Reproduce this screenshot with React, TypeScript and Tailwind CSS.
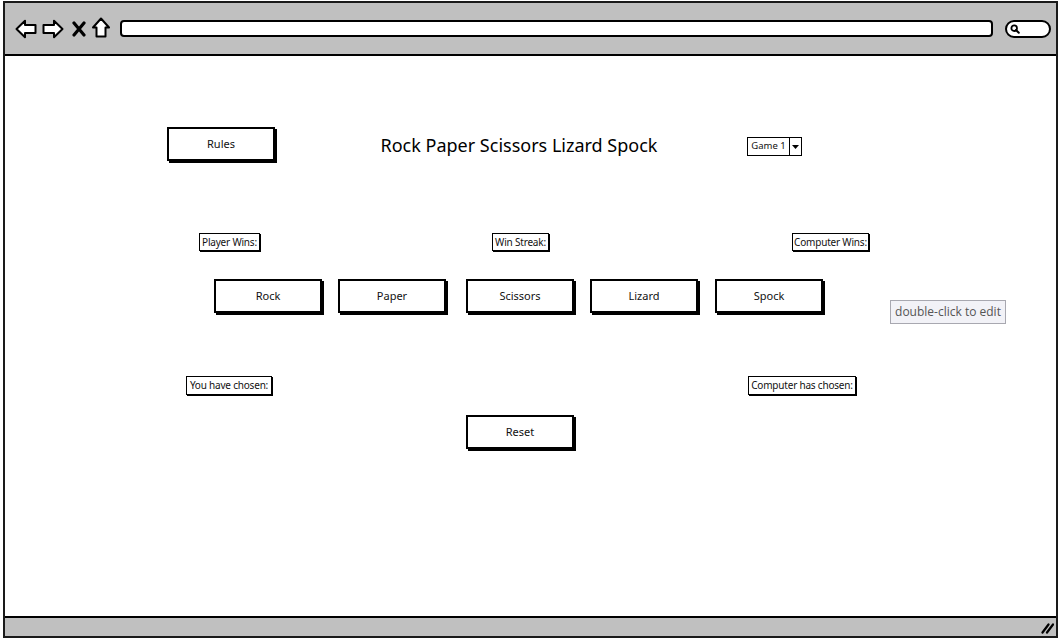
import React from 'react';

const SKETCH = '"Noto Sans", "Open Sans", sans-serif';

function ArrowLeft() {
  return (
    <svg width="22" height="20" viewBox="0 0 22 20">
      <path d="M1.5 10 L10 1.8 L10 6 L20.5 6 L20.5 14 L10 14 L10 18.2 Z" fill="#fff" stroke="#000" strokeWidth="2" strokeLinejoin="round" />
    </svg>
  );
}

function ArrowRight() {
  return (
    <svg width="22" height="20" viewBox="0 0 22 20">
      <path d="M20.5 10 L12 1.8 L12 6 L1.5 6 L1.5 14 L12 14 L12 18.2 Z" fill="#fff" stroke="#000" strokeWidth="2" strokeLinejoin="round" />
    </svg>
  );
}

function CloseX() {
  return (
    <svg width="14" height="16" viewBox="0 0 14 16">
      <path d="M2 2 L12 14 M12 2 L2 14" stroke="#000" strokeWidth="3.2" strokeLinecap="round" />
    </svg>
  );
}

function Home() {
  return (
    <svg width="18" height="21" viewBox="0 0 18 21">
      <path d="M9 1.5 L17 10.5 L13.5 10.5 L13.5 19.5 L4.5 19.5 L4.5 10.5 L1 10.5 Z" fill="#fff" stroke="#000" strokeWidth="2" strokeLinejoin="round" />
    </svg>
  );
}

function Grip() {
  return (
    <svg width="13" height="13" viewBox="0 0 13 13">
      <path d="M1.5 11.5 L7.5 3.5 M6 11.5 L12 3.5" stroke="#000" strokeWidth="2.2" strokeLinecap="round" />
    </svg>
  );
}

// Balsamiq-ish button: the drop shadow is part of the drawn edge, so reserve room for it
function SketchButton({ label, className = '' }: { label: string; className?: string }) {
  return (
    <div
      className={`w-[108px] h-[34px] mr-[2px] border-2 border-black bg-white shadow-[2px_2px_0_#000] flex items-center justify-center text-[11px] text-[#111] ${className}`}
    >
      {label}
    </div>
  );
}

function Label({ text, w, className = '' }: { text: string; w: string; className?: string }) {
  return (
    <div
      className={`${w} h-[18px] mr-[1px] border-[1.5px] border-black bg-white shadow-[1px_1px_0_#000] flex items-center justify-center text-[10px] text-[#111] whitespace-nowrap tracking-[-0.2px] ${className}`}
    >
      {text}
    </div>
  );
}

export default function App() {
  return (
    <div className="w-[1063px] h-[641px] bg-white overflow-hidden" style={{ fontFamily: SKETCH }}>
      <div className="ml-[3px] mt-[1px] w-[1055px] h-[637px] border-2 border-[#1a1a1a] flex flex-col">
        {/* browser chrome */}
        <div className="h-[53px] bg-[#c0c0c0] border-b-2 border-black flex items-center pl-[10px] pr-[5px]">
          <ArrowLeft />
          <div className="ml-[5px]">
            <ArrowRight />
          </div>
          <div className="ml-[8px]">
            <CloseX />
          </div>
          <div className="ml-[6px] -mt-[2px]">
            <Home />
          </div>
          <div className="ml-[10px] flex-1 h-[17px] bg-white border-2 border-black rounded-[4px]" />
          <div className="ml-[12px] w-[46px] h-[18px] bg-white border-2 border-black rounded-full flex items-center pl-[3px]">
            <svg width="10" height="10" viewBox="0 0 10 10">
              <circle cx="4.2" cy="4.2" r="2.8" fill="none" stroke="#000" strokeWidth="1.8" />
              <path d="M6 6 L8.8 8.8" stroke="#000" strokeWidth="2" strokeLinecap="round" />
            </svg>
          </div>
        </div>

        {/* page */}
        <div className="flex-1 bg-white flex flex-col">
          <div className="mt-[71px] flex items-start">
            <SketchButton label="Rules" className="ml-[162px] h-[32px]" />
            <div className="ml-[102px] w-[280px] h-[34px] flex items-center justify-center pt-[3px] text-[18px] text-black whitespace-nowrap">
              Rock Paper Scissors Lizard Spock
            </div>
            <div className="ml-[88px] mt-[10px] h-[19px] flex border-[1.5px] border-black bg-white">
              <div className="w-[41px] flex items-center justify-center text-[9.5px] text-[#111]">Game 1</div>
              <div className="w-[12px] border-l-[1.5px] border-black flex items-center justify-center">
                <svg width="7" height="4" viewBox="0 0 7 4">
                  <path d="M0 0 L7 0 L3.5 4 Z" fill="#000" />
                </svg>
              </div>
            </div>
          </div>

          <div className="mt-[72px] flex items-start">
            <Label text="Player Wins:" w="w-[61px]" className="ml-[194px]" />
            <Label text="Win Streak:" w="w-[57px]" className="ml-[231px]" />
            <Label text="Computer Wins:" w="w-[77px]" className="ml-[242px]" />
          </div>

          <div className="mt-[28px] flex items-start">
            <SketchButton label="Rock" className="ml-[209px]" />
            <SketchButton label="Paper" className="ml-[14px]" />
            <SketchButton label="Scissors" className="ml-[18px]" />
            <SketchButton label="Lizard" className="ml-[14px]" />
            <SketchButton label="Spock" className="ml-[15px]" />
            <div
              className="ml-[65px] mt-[21px] w-[116px] h-[24px] bg-[#f2f2f7] border border-[#a8a8b0] flex items-center justify-center text-[12px] text-[#555]"
              style={{ fontFamily: '"Open Sans", sans-serif' }}
            >
              double-click to edit
            </div>
          </div>

          <div className="mt-[52px] flex items-start">
            <Label text="You have chosen:" w="w-[86px]" className="ml-[181px] h-[19px]" />
            <Label text="Computer has chosen:" w="w-[108px]" className="ml-[475px] h-[19px]" />
          </div>

          <div className="mt-[20px] flex">
            <SketchButton label="Reset" className="ml-[461px]" />
          </div>
        </div>

        {/* status bar */}
        <div className="h-[20px] border-t-2 border-black bg-[#c0c0c0] flex items-center justify-end pr-[2px]">
          <Grip />
        </div>
      </div>
    </div>
  );
}
